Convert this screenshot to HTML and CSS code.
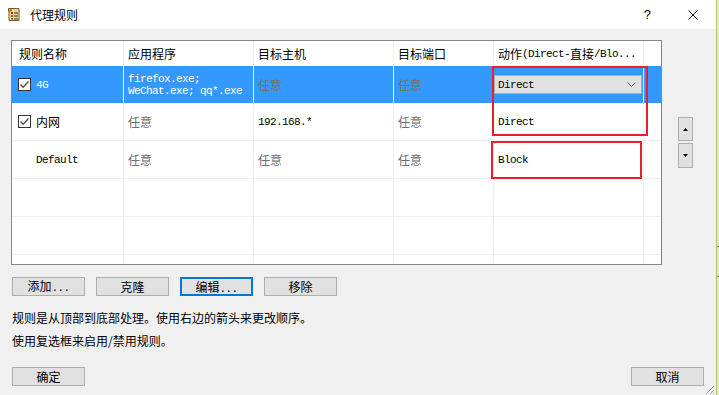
FILE: index.html
```html
<!DOCTYPE html>
<html lang="zh-CN">
<head>
<meta charset="UTF-8">
<title>代理规则</title>
<link rel="stylesheet" href="styles.css">
</head>
<body>

<div class="window">
  <div class="titlebar">
    <svg class="app-icon" viewBox="0 0 12 15">
      <path d="M2 1.5 H11 V13.5 H1 V3" fill="#ecd39a" stroke="#7a5a28" stroke-width="1"/>
      <path d="M0.5 1.5 H3 V4 H0.5 Z" fill="#d9b46a" stroke="#7a5a28" stroke-width="1"/>
      <rect x="3" y="5" width="2" height="2" fill="#d42020"/>
      <rect x="3" y="8" width="2" height="2" fill="#2a9a2a"/>
      <rect x="3" y="11" width="2" height="1.5" fill="#d42020"/>
      <path d="M6 6 H10 M6 9 H10 M6 12 H10" stroke="#333" stroke-width="1"/>
    </svg>
    <span class="title">代理规则</span>
    <span class="help">?</span>
    <svg class="close" viewBox="0 0 10 10">
      <path d="M0.5 0.5 L9.5 9.5 M9.5 0.5 L0.5 9.5" stroke="#111" stroke-width="1"/>
    </svg>
  </div>

  <div class="content">
    <div class="rules-area">
      <div class="table-wrap">
        <div class="rules">
          <div class="row head">
            <div class="cell first">规则名称</div>
            <div class="cell">应用程序</div>
            <div class="cell">目标主机</div>
            <div class="cell">目标端口</div>
            <div class="cell">动作<span class="mono">(Direct-</span>直接<span class="mono">/Blo...</span></div>
            <div class="cell"></div>
          </div>
          <div class="row selected">
            <div class="cell check-cell"><span class="checkbox"><svg viewBox="0 0 11 11"><path d="M1.5 5.5 L4.2 8.2 L9.5 2.5" fill="none" stroke="#555" stroke-width="1.4"/></svg></span><span class="mono">4G</span></div>
            <div class="cell stack"><span class="mono">firefox.exe;</span><span class="mono">WeChat.exe; qq*.exe</span></div>
            <div class="cell dim">任意</div>
            <div class="cell dim">任意</div>
            <div class="cell combo-cell">
              <div class="combo"><span class="mono">Direct</span>
                <svg class="chevron" viewBox="0 0 9 5"><path d="M0.5 0.5 L4.5 4.5 L8.5 0.5" fill="none" stroke="#555" stroke-width="1"/></svg>
              </div>
            </div>
            <div class="cell"></div>
          </div>
          <div class="row">
            <div class="cell check-cell"><span class="checkbox"><svg viewBox="0 0 11 11"><path d="M1.5 5.5 L4.2 8.2 L9.5 2.5" fill="none" stroke="#555" stroke-width="1.4"/></svg></span>内网</div>
            <div class="cell dim">任意</div>
            <div class="cell"><span class="mono">192.168.*</span></div>
            <div class="cell dim">任意</div>
            <div class="cell"><span class="mono">Direct</span></div>
            <div class="cell"></div>
          </div>
          <div class="row">
            <div class="cell indent"><span class="mono">Default</span></div>
            <div class="cell dim">任意</div>
            <div class="cell dim">任意</div>
            <div class="cell dim">任意</div>
            <div class="cell"><span class="mono">Block</span></div>
            <div class="cell"></div>
          </div>
          <div class="row">
            <div class="cell"></div><div class="cell"></div><div class="cell"></div>
            <div class="cell"></div><div class="cell"></div><div class="cell"></div>
          </div>
          <div class="row">
            <div class="cell"></div><div class="cell"></div><div class="cell"></div>
            <div class="cell"></div><div class="cell"></div><div class="cell"></div>
          </div>
          <div class="row">
            <div class="cell"></div><div class="cell"></div><div class="cell"></div>
            <div class="cell"></div><div class="cell"></div><div class="cell"></div>
          </div>
        </div>
        <div class="mark mark-direct"></div>
        <div class="mark mark-block"></div>
      </div>

      <div class="order-btns">
        <button class="arrow up"><svg viewBox="0 0 5 3"><path d="M0 3 L2.5 0 L5 3 Z" fill="#000"/></svg></button>
        <button class="arrow down"><svg viewBox="0 0 5 3"><path d="M0 0 L2.5 3 L5 0 Z" fill="#000"/></svg></button>
      </div>
    </div>

    <div class="actions">
      <button class="btn">添加<span class="mono">...</span></button>
      <button class="btn">克隆</button>
      <button class="btn focused">编辑<span class="mono">...</span></button>
      <button class="btn">移除</button>
    </div>

    <p class="hint first-hint">规则是从顶部到底部处理。使用右边的箭头来更改顺序。</p>
    <p class="hint">使用复选框来启用/禁用规则。</p>

    <div class="footer">
      <button class="btn">确定</button>
      <button class="btn">取消</button>
    </div>
  </div>

  <svg class="grip" viewBox="0 0 12 12">
    <path d="M11 3 L3 11 M11 7 L7 11 M11 10 L10 11" stroke="#a0a0a0" stroke-width="1"/>
  </svg>
</div>
<div class="edge">
  <span class="tick"></span>
  <span class="tick"></span>
</div>

</body>
</html>
```

FILE: styles.css
```css
body {
  margin: 0;
  width: 719px;
  height: 395px;
  overflow: hidden;
  display: flex;
  background-color: #e4e4e4;
  font-family: "Noto Sans CJK SC", sans-serif;
  font-size: 12px;
  color: #000;
}
.window {
  position: relative;
  width: 716px;
  height: 395px;
  background-color: #f0f0f0;
  border-right: 1px solid #a6d04a;
}
.titlebar {
  height: 29px;
  background-color: #fff;
  display: flex;
  align-items: center;
  padding-left: 8px;
}
.app-icon {
  width: 12px;
  height: 15px;
  margin-right: 10px;
}
.title {
  flex: 1;
  line-height: 16px;
}
.help {
  font-family: "Liberation Sans", sans-serif;
  font-size: 13px;
  margin-right: 37px;
}
.close {
  width: 10px;
  height: 10px;
  margin-right: 18px;
}
.mono {
  font-family: "Liberation Mono", monospace;
  font-size: 11px;
  letter-spacing: -0.6px;
}
.content {
  padding: 11px 0 0 11px;
}
.rules-area {
  display: flex;
  align-items: flex-start;
}
.table-wrap {
  position: relative;
}
.rules {
  width: 649px;
  height: 223px;
  overflow: hidden;
  border: 1px solid #828790;
  background-color: #fff;
}
.row {
  display: grid;
  grid-template-columns: 112px 130px 140px 100px 150px 17px;
  height: 38px;
  box-sizing: border-box;
  border-bottom: 1px solid #f0f0f0;
}
.row.head {
  height: 25px;
  border-bottom: none;
}
.row.selected {
  background-color: #3399ff;
  color: #fff;
  height: 37px;
  border-bottom: none;
}
.cell {
  display: flex;
  align-items: center;
  padding-left: 4px;
  border-right: 1px solid #f0f0f0;
  white-space: nowrap;
  overflow: hidden;
  line-height: 16px;
}
.cell:last-child {
  border-right: none;
}
.cell.first {
  padding-left: 7px;
}
.cell.check-cell {
  padding-left: 6px;
}
.cell.indent {
  padding-left: 24px;
}
.cell.stack {
  flex-direction: column;
  align-items: flex-start;
  justify-content: center;
}
.cell.stack .mono {
  line-height: 12px;
}
.dim {
  color: #6d6d6d;
}
.selected .dim {
  color: #7a7066;
}
.checkbox {
  width: 11px;
  height: 11px;
  border: 1px solid #333;
  background-color: #fff;
  margin-right: 5px;
  display: flex;
}
.checkbox svg {
  width: 11px;
  height: 11px;
}
.cell.combo-cell {
  padding-left: 0;
}
.combo {
  width: 148px;
  height: 19px;
  box-sizing: border-box;
  border: 1px solid #adadad;
  background-color: #e1e1e1;
  color: #000;
  display: flex;
  align-items: center;
  padding-left: 3px;
}
.combo .mono {
  flex: 1;
}
.chevron {
  width: 9px;
  height: 5px;
  margin-right: 5px;
}
.mark {
  position: absolute;
  border: 2px solid #e8202a;
  box-sizing: border-box;
}
.mark-direct {
  left: 481px;
  top: 26px;
  width: 156px;
  height: 70px;
}
.mark-block {
  left: 480px;
  top: 101px;
  width: 151px;
  height: 38px;
}
.order-btns {
  display: flex;
  flex-direction: column;
  gap: 2px;
  margin-left: 16px;
  margin-top: 77px;
}
.arrow {
  width: 15px;
  height: 24px;
  padding: 0;
  border: 1px solid #adadad;
  background-color: #e1e1e1;
  display: flex;
  align-items: center;
  justify-content: center;
}
.arrow.down {
  height: 25px;
}
.arrow svg {
  width: 5px;
  height: 3px;
}
.actions {
  display: flex;
  gap: 11px;
  margin-top: 12px;
  padding-left: 1px;
}
.btn {
  width: 73px;
  height: 19px;
  box-sizing: border-box;
  padding: 0;
  border: 1px solid #adadad;
  background-color: #e1e1e1;
  font-family: "Noto Sans CJK SC", sans-serif;
  font-size: 12px;
  line-height: 16px;
  color: #000;
}
.btn.focused {
  border: 2px solid #0078d7;
}
.hint {
  margin: 7px 0 0 1px;
  line-height: 16px;
}
.hint.first-hint {
  margin-top: 14px;
}
.footer {
  display: flex;
  justify-content: space-between;
  margin-top: 18px;
  padding-left: 1px;
  margin-right: 12px;
}
.grip {
  position: absolute;
  right: 1px;
  bottom: 0;
  width: 12px;
  height: 12px;
}
.edge {
  flex: 1;
  display: flex;
  flex-direction: column;
  padding-top: 246px;
  gap: 29px;
}
.tick {
  height: 1px;
  background-color: #777;
}
```
